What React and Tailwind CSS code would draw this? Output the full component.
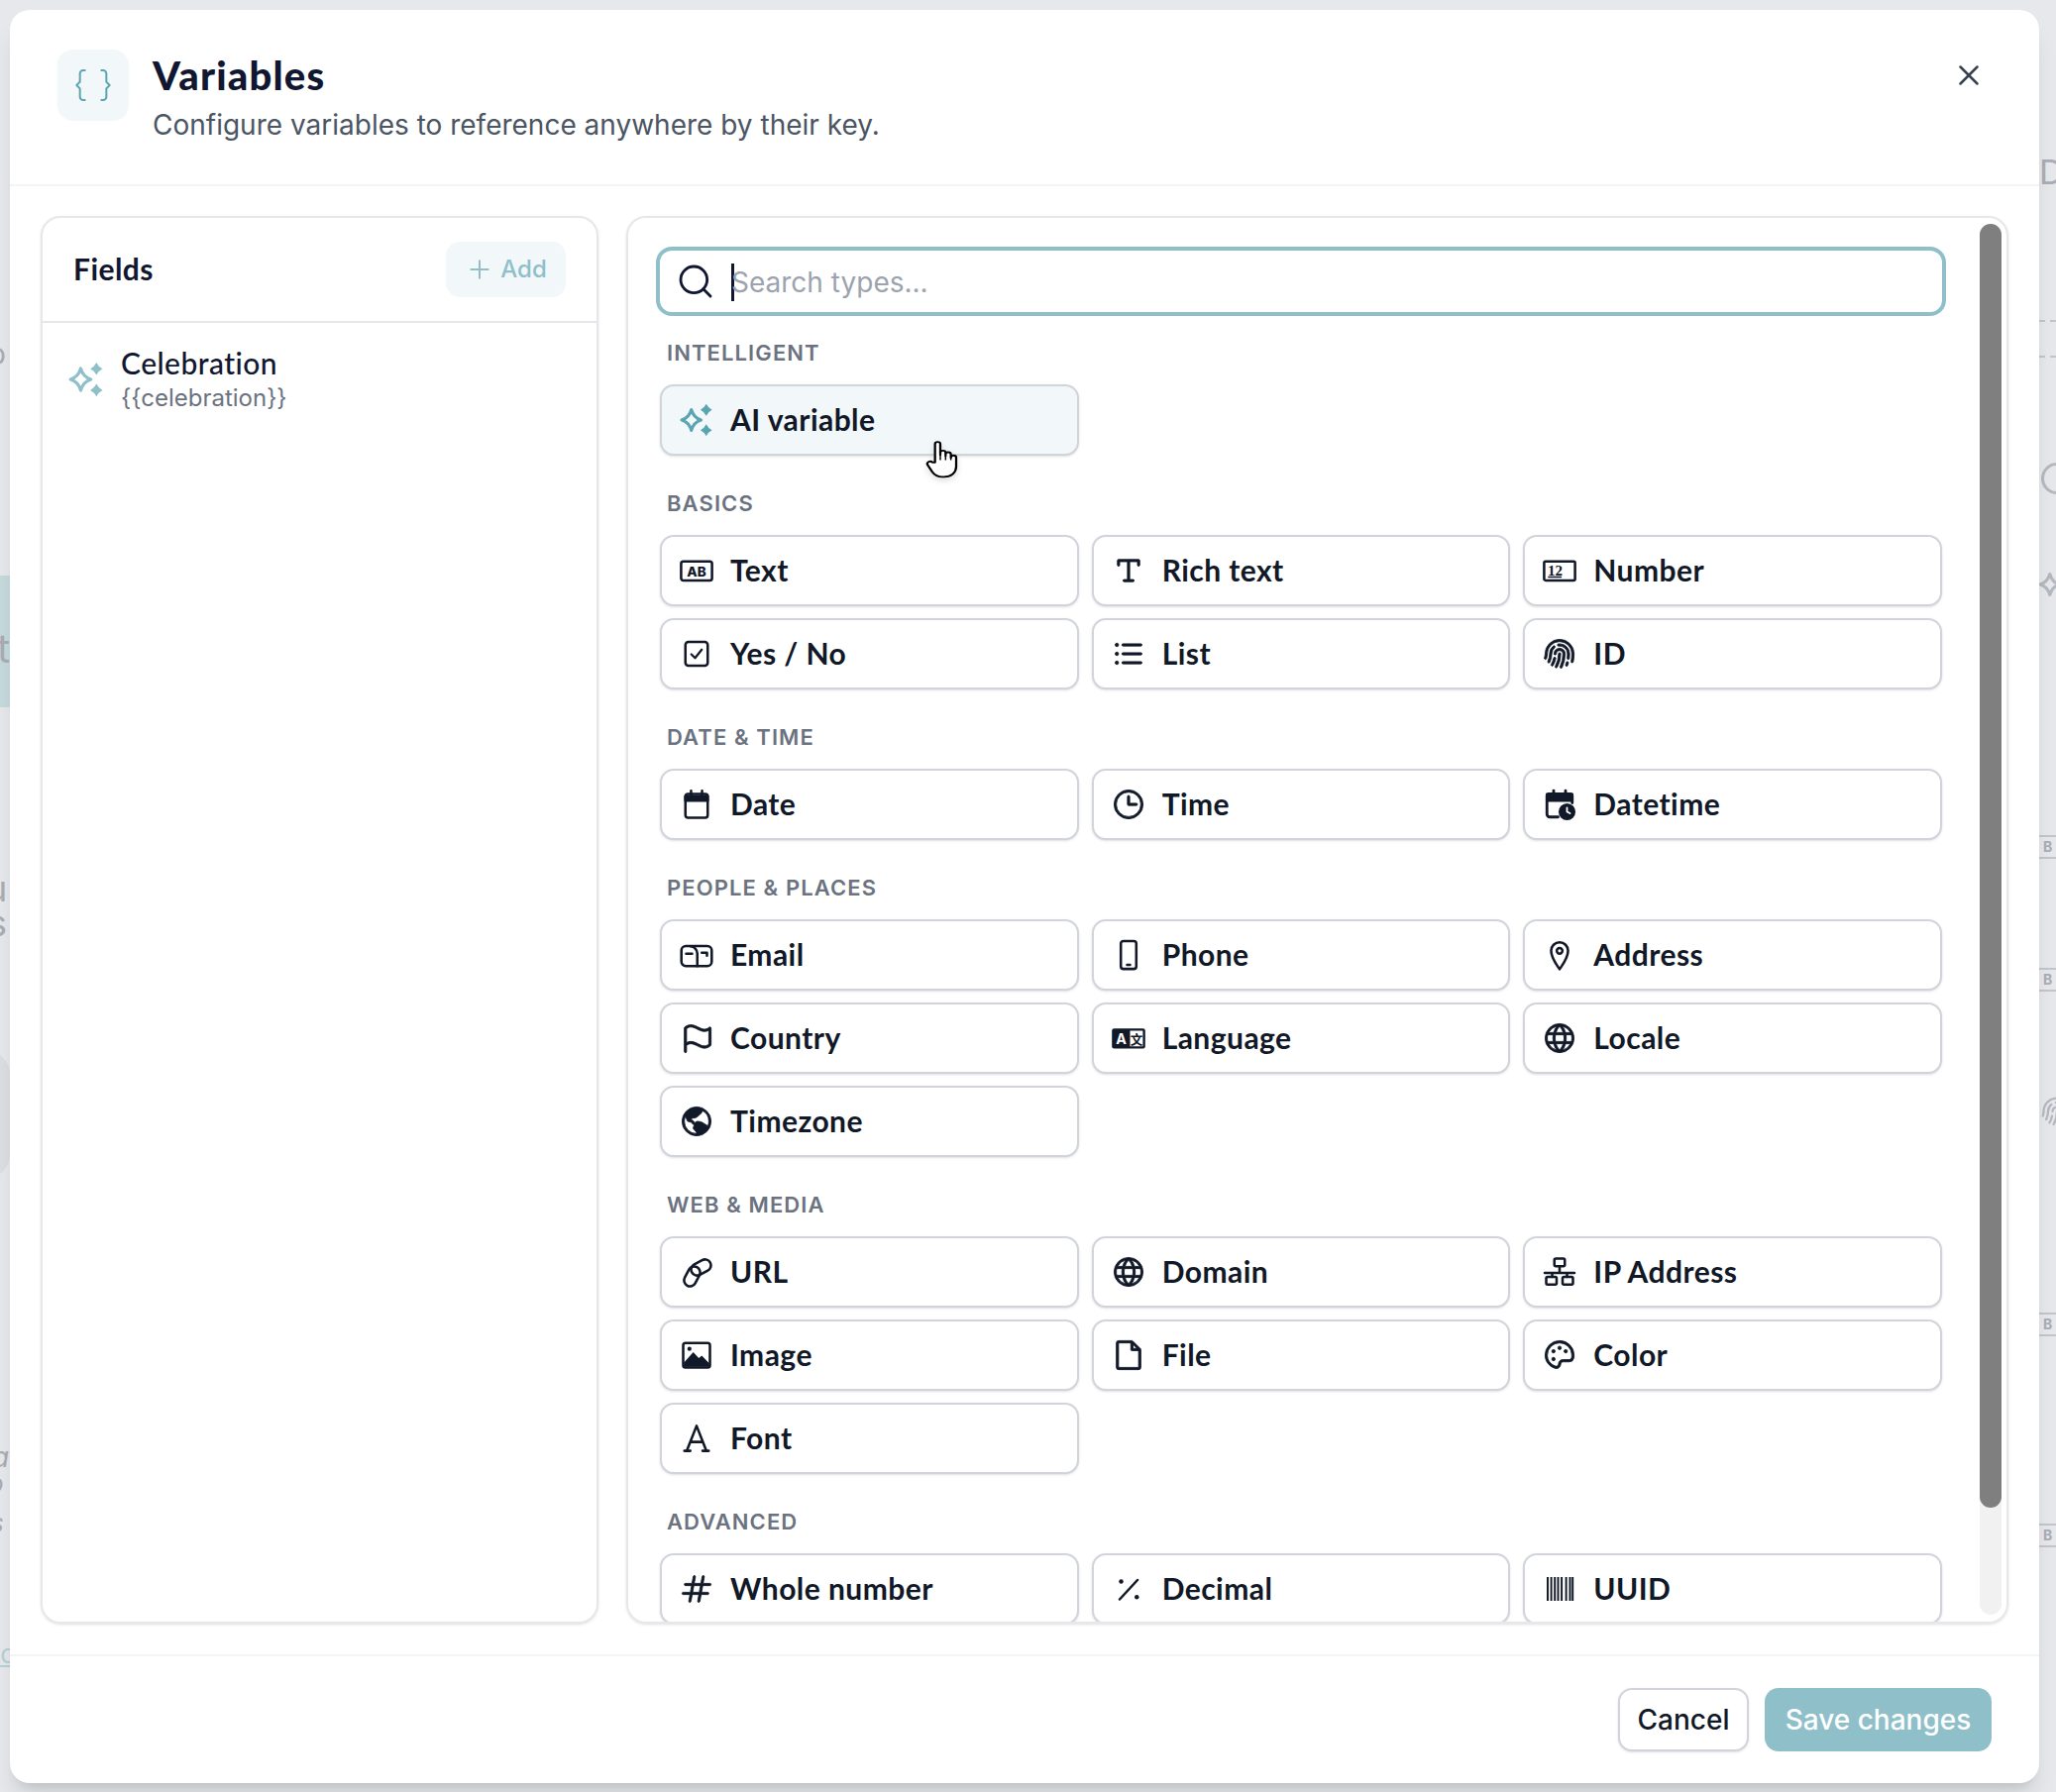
import { X, Plus, Search } from "lucide-react";
import {
  PiTextT,
  PiListBullets,
  PiFingerprint,
  PiClock,
  PiFlag,
  PiGlobe,
  PiGlobeHemisphereWestFill,
  PiFile,
  PiPalette,
  PiHash,
} from "react-icons/pi";

const LABEL_FONT = "font-['Lato','Inter',sans-serif]";
const BODY_FONT = "font-['Inter',sans-serif]";

function Svg({ children }) {
  return (
    <svg viewBox="0 0 24 24" className="h-9 w-9" fill="none" stroke="currentColor" strokeWidth="1.7" strokeLinecap="round" strokeLinejoin="round">
      {children}
    </svg>
  );
}

function Sparkles({ className }) {
  return (
    <svg viewBox="0 0 24 24" className={className} fill="none" stroke="currentColor" strokeWidth="2" strokeLinejoin="round">
      <path d="M8.5 5 Q10 10.5 15 12 Q10 13.5 8.5 19 Q7 13.5 2 12 Q7 10.5 8.5 5Z" />
      <path d="M18.5 1.2 Q19.8 3.9 22.4 5.2 Q19.8 6.5 18.5 9.2 Q17.2 6.5 14.6 5.2 Q17.2 3.9 18.5 1.2Z" fill="currentColor" stroke="none" />
      <path d="M18.5 14.9 Q19.8 17.6 22.4 18.9 Q19.8 20.2 18.5 22.9 Q17.2 20.2 14.6 18.9 Q17.2 17.6 18.5 14.9Z" fill="currentColor" stroke="none" />
    </svg>
  );
}

function Hand() {
  return (
    <svg viewBox="0 0 30 36" preserveAspectRatio="none" className="absolute left-[265px] top-[54px] h-[39px] w-10 drop-shadow-md" fill="white" stroke="black" strokeWidth="1.7" strokeLinejoin="round">
      <path d="M8 21V4a2 2 0 0 1 4 0V14V12a2 2 0 0 1 4 0V15V13.5a2 2 0 0 1 4 0V16.5a2 2 0 0 1 4 0V25c0 5.5-3.5 9.5-9 9.5h-1.5c-4 0-6-2-7.5-4.5L2.5 23.5c-1.5-2.5 2-4.5 3.5-2.5Z" />
      <path d="M12 14V19M16 15V19M20 16V19" fill="none" strokeWidth="1.1" />
    </svg>
  );
}

function TextBoxIcon() {
  return (
    <Svg>
      <rect x="1.6" y="5.8" width="20.8" height="12.8" rx="1.5" />
      <text x="12" y="15.7" textAnchor="middle" fontSize="9" fontWeight="800" fontFamily="Inter, sans-serif" fill="currentColor" stroke="none">AB</text>
    </Svg>
  );
}

function NumberBoxIcon() {
  return (
    <Svg>
      <rect x="1.6" y="5.8" width="20.8" height="12.8" rx="1" />
      <text x="9" y="15" textAnchor="middle" fontSize="10" fontWeight="700" fontFamily="Liberation Serif, serif" fill="currentColor" stroke="none">12</text>
      <path d="M4.6 16.4H13" strokeWidth="1" />
    </Svg>
  );
}

function CheckBoxIcon() {
  return (
    <Svg>
      <rect x="4.5" y="4" width="15" height="16" rx="2" />
      <path d="M8.5 12.3L11 14.8L15.5 9.2" strokeWidth="1.5" />
    </Svg>
  );
}

function CalendarIcon() {
  return (
    <Svg>
      <rect x="4.5" y="5" width="15" height="16" rx="1.6" />
      <path d="M4.5 6.5H19.5V9.5H4.5Z" fill="currentColor" />
      <path d="M8.3 2.8V5.5M15.7 2.8V5.5" />
    </Svg>
  );
}

function CalendarClockIcon() {
  return (
    <Svg>
      <path d="M11 20.5H5.5A2 2 0 0 1 3.5 18.5V6.5A1.5 1.5 0 0 1 5 5H19A1.5 1.5 0 0 1 20.5 6.5V11" strokeWidth="1.9" />
      <path d="M3.5 5.2H20.5V9.5H3.5Z" fill="currentColor" />
      <path d="M8 2.8V6M16 2.8V6" strokeWidth="1.9" />
      <circle cx="17" cy="17" r="5.7" fill="currentColor" stroke="none" />
      <path d="M17 14.2V17L19 18" stroke="white" strokeWidth="1.2" />
    </Svg>
  );
}

function MailboxIcon() {
  return (
    <Svg>
      <rect x="1.8" y="6" width="20.4" height="13.5" rx="3" />
      <path d="M8 6.2A5 5 0 0 1 12.5 11V19.5" />
      <path d="M5 11.2H9M15.5 10.5H19V12.5" />
    </Svg>
  );
}

function PhoneIcon() {
  return (
    <Svg>
      <rect x="6.8" y="2.6" width="10.4" height="18.8" rx="1.8" />
      <path d="M11 18.6H13" />
    </Svg>
  );
}

function PinIcon() {
  return (
    <Svg>
      <path d="M12 21.6C9.6 18 6.3 14 6.3 9.2A5.7 5.7 0 0 1 17.7 9.2C17.7 14 14.4 18 12 21.6Z" />
      <circle cx="12" cy="9.2" r="1.9" />
    </Svg>
  );
}

function LanguageIcon() {
  return (
    <svg viewBox="0 0 24 24" className="h-9 w-9" stroke="none">
      <rect x="0.8" y="5.5" width="22.4" height="13.5" rx="1.5" fill="currentColor" />
      <text x="7" y="15.9" textAnchor="middle" fontSize="9.5" fontWeight="700" fontFamily="Inter, sans-serif" fill="white">A</text>
      <rect x="13" y="7" width="8.6" height="10.5" fill="white" />
      <text x="17.3" y="15.7" textAnchor="middle" fontSize="8.4" fontWeight="700" fontFamily="Noto Sans CJK SC, sans-serif" fill="currentColor">文</text>
    </svg>
  );
}

function LinkIcon() {
  return (
    <Svg>
      <rect x="2" y="11" width="14" height="8" rx="4" transform="rotate(-62 9 15)" />
      <rect x="8" y="5" width="14" height="8" rx="4" transform="rotate(-28 15 9)" />
    </Svg>
  );
}

function ImageIcon() {
  return (
    <Svg>
      <rect x="3" y="3.8" width="18" height="16.5" rx="1.5" />
      <path d="M3.5 19.8V17L9.8 10L13.5 14L15.5 12.3L20.5 17.5V19.8Z" fill="currentColor" stroke="none" />
      <circle cx="7.2" cy="7.8" r="1.4" fill="currentColor" stroke="none" />
    </Svg>
  );
}

function FontIcon() {
  return (
    <Svg>
      <path d="M5.5 20.2L12 3.6L18.5 20.2M8 14.4H16" />
      <path d="M3.8 20.4H7.8M16 20.4H20.2" />
    </Svg>
  );
}

function SlashDotsIcon() {
  return (
    <Svg>
      <path d="M18 6L6 19" />
      <circle cx="7" cy="7" r="1.5" fill="currentColor" stroke="none" />
      <circle cx="17.5" cy="17.5" r="1.5" fill="currentColor" stroke="none" />
    </Svg>
  );
}

function BarcodeIcon() {
  return (
    <Svg>
      <path d="M4 4V20M6.4 4V20M8.8 4V20M11 4V20M13.4 4V20M16.4 4V20M19 4V20M20.8 4V20" strokeWidth="1.3" strokeLinecap="butt" />
    </Svg>
  );
}

function NetworkIcon() {
  return (
    <Svg>
      <rect x="8.5" y="3" width="7" height="5.2" rx="1" />
      <path d="M12 8.2V12.6M2 12.6H22M7 12.6V15.3M17 12.6V15.3" />
      <rect x="3" y="15.3" width="7" height="5.2" rx="1" />
      <rect x="14" y="15.3" width="7" height="5.2" rx="1" />
    </Svg>
  );
}

function pi(Icon) {
  return <Icon size={36} strokeWidth={6} />;
}

const SECTIONS = [
  {
    title: "INTELLIGENT",
    items: [{ label: "AI variable", icon: <Sparkles className="h-9 w-9 text-[#5ba5b2]" />, active: true }],
  },
  {
    title: "BASICS",
    items: [
      { label: "Text", icon: <TextBoxIcon /> },
      { label: "Rich text", icon: pi(PiTextT) },
      { label: "Number", icon: <NumberBoxIcon /> },
      { label: "Yes / No", icon: <CheckBoxIcon /> },
      { label: "List", icon: pi(PiListBullets) },
      { label: "ID", icon: pi(PiFingerprint) },
    ],
  },
  {
    title: "DATE & TIME",
    items: [
      { label: "Date", icon: <CalendarIcon /> },
      { label: "Time", icon: pi(PiClock) },
      { label: "Datetime", icon: <CalendarClockIcon /> },
    ],
  },
  {
    title: "PEOPLE & PLACES",
    items: [
      { label: "Email", icon: <MailboxIcon /> },
      { label: "Phone", icon: <PhoneIcon /> },
      { label: "Address", icon: <PinIcon /> },
      { label: "Country", icon: pi(PiFlag) },
      { label: "Language", icon: <LanguageIcon /> },
      { label: "Locale", icon: pi(PiGlobe) },
      { label: "Timezone", icon: pi(PiGlobeHemisphereWestFill) },
    ],
  },
  {
    title: "WEB & MEDIA",
    items: [
      { label: "URL", icon: <LinkIcon /> },
      { label: "Domain", icon: pi(PiGlobe) },
      { label: "IP Address", icon: <NetworkIcon /> },
      { label: "Image", icon: <ImageIcon /> },
      { label: "File", icon: pi(PiFile) },
      { label: "Color", icon: pi(PiPalette) },
      { label: "Font", icon: <FontIcon /> },
    ],
  },
  {
    title: "ADVANCED",
    items: [
      { label: "Whole number", icon: pi(PiHash) },
      { label: "Decimal", icon: <SlashDotsIcon /> },
      { label: "UUID", icon: <BarcodeIcon /> },
    ],
  },
];

function TypeButton({ item }) {
  return (
    <button
      className={`relative flex h-[72px] items-center gap-4 rounded-[14px] border-2 border-[#d1d5db] pl-[17px] text-left shadow-sm ${
        item.active ? "bg-[#f2f7f9]" : "bg-white"
      }`}
    >
      <span className="flex h-9 w-9 shrink-0 items-center justify-center text-[#111827]">{item.icon}</span>
      <span className={`${LABEL_FONT} pb-[2px] text-[30px] font-bold tracking-[0.015em] text-[#111827]`}>{item.label}</span>
      {item.active && <Hand />}
    </button>
  );
}

// what is left of the page behind the dialog, dimmed
function Backdrop() {
  const fragment = "absolute font-['Inter',sans-serif] text-[#a9adb4]";
  return (
    <>
      <div className="absolute left-0 top-[581px] h-[133px] w-3 bg-[#c6d9dd]" />
      <div className="absolute left-[-40px] top-[1060px] h-[130px] w-[50px] rounded-full bg-[#dcdee2]" />
      <span className={`${fragment} left-[-12px] top-[335px] text-[30px]`}>o</span>
      <span className={`${fragment} left-[-3px] top-[625px] text-[40px]`}>t</span>
      <span className={`${fragment} left-[-12px] top-[770px] text-[24px]`}>s</span>
      <span className={`${fragment} left-[-14px] top-[870px] text-[36px]`}>u</span>
      <span className={`${fragment} left-[-12px] top-[905px] text-[36px]`}>s</span>
      <span className={`${fragment} left-[-8px] top-[1450px] text-[28px] italic`}>a</span>
      <span className={`${fragment} left-[-12px] top-[1478px] text-[26px] italic`}>o</span>
      <span className={`${fragment} left-[-10px] top-[1518px] text-[26px] italic`}>s</span>
      <span className="absolute left-[-8px] top-[1650px] font-['Inter',sans-serif] text-[26px] text-[#b4d0d6] underline">to</span>
      <span className={`${fragment} left-[2058px] top-[148px] text-[34px]`}>D</span>
      <div className="absolute left-[2058px] top-[323px] w-[17px] border-t-2 border-dashed border-[#c2c5cb]" />
      <div className="absolute left-[2058px] top-[359px] w-[17px] border-t-2 border-dashed border-[#c2c5cb]" />
      <div className="absolute left-[2060px] top-[467px] h-8 w-8 rounded-full border-[3px] border-[#b4b8bf]" />
      <Sparkles className="absolute left-[2056px] top-[572px] h-9 w-9 text-[#b4b8bf]" />
      <div className="absolute left-[2058px] top-[1104px] text-[#b4b8bf]">
        <PiFingerprint size={36} />
      </div>
      {[843, 977, 1325, 1538].map((y) => (
        <div key={y} className={`${fragment} left-[2058px] h-6 w-[17px] border-y-2 border-[#c2c5cb] pl-1 text-[14px] font-bold leading-5`} style={{ top: y }}>
          B
        </div>
      ))}
    </>
  );
}

export default function App() {
  return (
    <div className="relative h-[1809px] w-[2075px] overflow-hidden bg-[#e6e8ec] pl-[10px] pt-[10px]">
      <Backdrop />
      <div className="relative flex h-[1790px] w-[2048px] flex-col rounded-[20px] bg-white shadow-xl">
        {/* Header */}
        <div className="flex h-[178px] shrink-0 items-start gap-6 border-b-2 border-[#f3f4f6] pl-12 pr-[54px] pt-10">
          <div className="flex h-[72px] w-[72px] items-center justify-center rounded-[16px] bg-[#f2f7f9]">
            <svg viewBox="0 0 24 24" className="h-10 w-10 text-[#5ba5b2]" fill="none" stroke="currentColor" strokeWidth="1.2" strokeLinecap="round" strokeLinejoin="round">
              <path d="M7 3H6A2 2 0 0 0 4 5V10L2 12L4 14V19A2 2 0 0 0 6 21H7" />
              <path d="M17 3H18A2 2 0 0 1 20 5V10L22 12L20 14V19A2 2 0 0 1 18 21H17" />
            </svg>
          </div>
          <div className="flex-1">
            <h1 className={`${LABEL_FONT} text-[40px] font-black leading-[52px] tracking-[0.03em] text-[#111631]`}>Variables</h1>
            <p className={`${BODY_FONT} mt-[1px] text-[28px] leading-[46px] text-[#4b5563]`}>
              Configure variables to reference anywhere by their key.
            </p>
          </div>
          <X size={34} strokeWidth={1.8} className="mt-[9px] text-[#374151]" />
        </div>

        {/* Panels */}
        <div className="flex min-h-0 flex-1 gap-[28px] px-[31px] pb-[31px] pt-[30px]">
          <div className="w-[563px] shrink-0 overflow-hidden rounded-[20px] border-2 border-[#e5e7eb] shadow-sm">
            <div className="flex h-[106px] items-center justify-between border-b-2 border-[#e5e7eb] pl-[31px] pr-[31px]">
              <span className={`${LABEL_FONT} pb-[2px] text-[30px] font-bold tracking-[0.015em] text-[#111631]`}>Fields</span>
              <button className={`${BODY_FONT} flex h-14 w-[121px] items-center justify-center gap-[6px] rounded-[14px] bg-[#f2f7f9] text-[24px] font-medium text-[#8fc0ca]`}>
                <Plus size={30} strokeWidth={1.6} />
                Add
              </button>
            </div>
            <div className="flex items-center gap-[16px] pl-[25px] pt-[21px]">
              <Sparkles className="h-[38px] w-[38px] text-[#8fc0ca]" />
              <div>
                <div className={`${LABEL_FONT} text-[30px] font-medium leading-[38px] tracking-[0.015em] text-[#111631]`}>Celebration</div>
                <div className={`${BODY_FONT} text-[24px] leading-[33px] text-[#6b7280]`}>{"{{celebration}}"}</div>
              </div>
            </div>
          </div>

          <div className="flex min-w-0 flex-1 overflow-hidden rounded-[20px] border-2 border-[#e5e7eb] shadow-sm">
            <div className="min-w-0 flex-1 pl-[28px] pr-[34px] pt-[29px]">
              <div className="mb-[25px] flex h-[70px] items-center gap-4 rounded-[16px] border-4 border-[#8fc0ca] pl-4">
                <Search size={40} strokeWidth={1.7} className="text-[#111631]" />
                <div className={`${BODY_FONT} flex items-center pt-[2px] text-[28px] text-[#9ca3af]`}>
                  <span className="mr-[-3px] h-[38px] w-[3px] bg-[#111631]" />
                  Search types...
                </div>
              </div>
              <div className="flex flex-col gap-9 px-1">
                {SECTIONS.map((section) => (
                  <div key={section.title}>
                    <div className={`${BODY_FONT} mb-5 h-6 text-[22px] font-semibold leading-6 tracking-[0.05em] text-[#6b7280]`}>
                      <span className="pl-[7px]">{section.title}</span>
                    </div>
                    <div className="grid grid-cols-3 gap-x-[13px] gap-y-3">
                      {section.items.map((item) => (
                        <TypeButton key={item.label} item={item} />
                      ))}
                    </div>
                  </div>
                ))}
              </div>
            </div>
            {/* Scrollbar */}
            <div className="mb-[7px] mr-[5px] mt-[6px] w-[22px] shrink-0 rounded-full bg-[#f1f1f1]">
              <div className="h-[1296px] rounded-full bg-[#7f7f7f]" />
            </div>
          </div>
        </div>

        {/* Footer */}
        <div className="flex h-[130px] shrink-0 items-center justify-end gap-4 border-t-2 border-[#f3f4f6] pr-12">
          <button className={`${BODY_FONT} h-16 w-[132px] rounded-[14px] border-2 border-[#d1d5db] bg-white text-[28px] font-medium text-[#111827] shadow-sm`}>
            Cancel
          </button>
          <button className={`${BODY_FONT} h-16 w-[229px] rounded-[14px] bg-[#8fc0ca] text-[28px] font-medium text-white`}>
            Save changes
          </button>
        </div>
      </div>
    </div>
  );
}
